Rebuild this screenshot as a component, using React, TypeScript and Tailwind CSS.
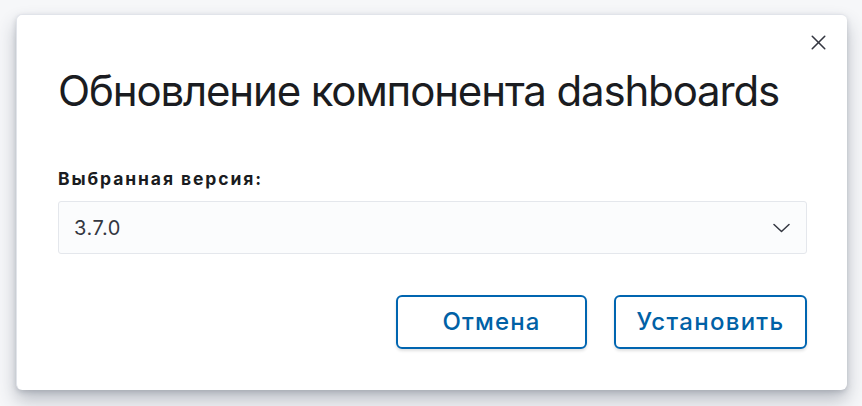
import { X } from "lucide-react";

export default function App() {
  return (
    <div
      className="w-[862px] h-[406px] bg-[#f6f7f9] pt-[14px] pl-[16px] overflow-hidden"
      style={{ fontFamily: "Inter, 'Noto Sans', sans-serif" }}
    >
      <div className="relative w-[831px] h-[376px] bg-white rounded-[6px] border-t border-l border-[#e1e4ea] shadow-[0_10px_18px_rgba(55,65,85,0.32),0_2px_5px_rgba(55,65,85,0.18)] px-[41px] pt-[52px]">
        <button className="absolute right-[16px] top-[15px] text-[#343741]">
          <X size={25} strokeWidth={1.5} />
        </button>
        <h1 className="text-[42px] leading-[48px] text-[#1a1c21] tracking-[-1.15px]">
          Обновление компонента dashboards
        </h1>
        <div className="mt-[54px] text-[17.5px] font-bold text-[#1a1c21] leading-[20px] tracking-[1.9px]">
          Выбранная версия:
        </div>
        <div className="mt-[12px] h-[53px] w-[749px] flex items-center justify-between bg-[#fbfcfd] border border-[#e4e7ec] rounded-[3px] pl-[15px] pr-[16px]">
          <span className="text-[20px] text-[#343741] tracking-[0.6px]">3.7.0</span>
          <svg width="17" height="10" viewBox="0 0 17 10" fill="none" className="text-[#343741]">
            <path d="M1 1.5 8.5 8.5 16 1.5" stroke="currentColor" strokeWidth="1.5" strokeLinecap="round" strokeLinejoin="round" />
          </svg>
        </div>
        <div className="mt-[41px] flex justify-end gap-[27px] w-[749px]">
          <button className="w-[191px] h-[54px] border-2 border-[#0065b0] rounded-[6px] text-[#0061a6] text-[24px] font-medium tracking-[1.1px] shadow-[0_2px_3px_rgba(0,0,0,0.12)]">
            Отмена
          </button>
          <button className="w-[193px] h-[54px] border-2 border-[#0065b0] rounded-[6px] text-[#0061a6] text-[24px] font-medium tracking-[1.3px] shadow-[0_2px_3px_rgba(0,0,0,0.12)]">
            Установить
          </button>
        </div>
      </div>
    </div>
  );
}
